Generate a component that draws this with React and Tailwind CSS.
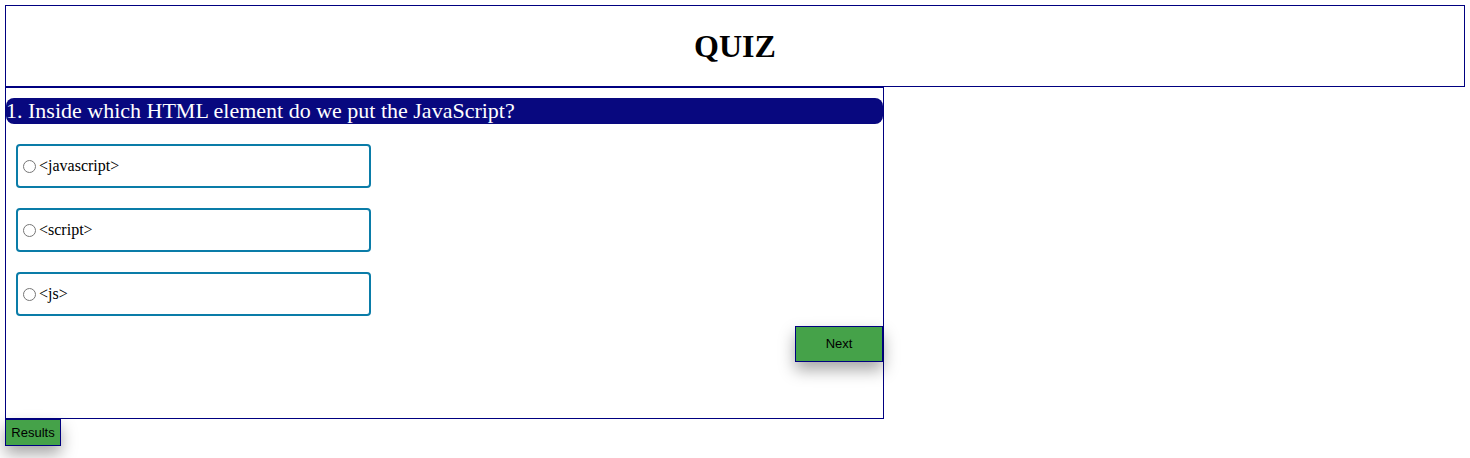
import React from "react";

const options = ["<javascript>", "<script>", "<js>"];

const App = () => {
  return (
    <div className="p-[5px] bg-white min-h-[458px]" style={{ fontFamily: '"Liberation Serif", serif' }}>
      {/* Header */}
      <div className="h-[82px] border border-[#000080] flex items-center justify-center">
        <h1 className="text-[32px] font-bold text-black">QUIZ</h1>
      </div>

      {/* Quiz box */}
      <div className="w-[879px] h-[332px] border border-[#000080] pt-[10px] flex flex-col">
        <div className="h-[26px] bg-[#08087f] rounded-[8px] text-white text-[22px] leading-[26px] whitespace-nowrap">
          1. Inside which HTML element do we put the JavaScript?
        </div>

        <div className="mt-[20px] ml-[10px] flex flex-col gap-[20px]">
          {options.map((opt) => (
            <label
              key={opt}
              className="w-[355px] h-[44px] border-2 border-[#0a7ca8] rounded-[4px] flex items-center pl-[2px] text-[16px] text-black"
            >
              <input type="radio" name="q1" className="w-[13px] h-[13px] m-[3px] mr-[3px]" />
              {opt}
            </label>
          ))}
        </div>

        <div className="flex justify-end mt-[10px]">
          <button
            className="w-[88px] h-[36px] bg-[#45a249] border border-[#000080] text-[13px] text-black shadow-[0_8px_16px_rgba(0,0,0,0.35)]"
            style={{ fontFamily: '"Liberation Sans", Arial, sans-serif' }}
          >
            Next
          </button>
        </div>
      </div>

      <button
        className="w-[56px] h-[27px] bg-[#45a249] border border-[#000080] text-[13px] text-black shadow-[0_8px_16px_rgba(0,0,0,0.35)]"
        style={{ fontFamily: '"Liberation Sans", Arial, sans-serif' }}
      >
        Results
      </button>
    </div>
  );
};

export default App;
